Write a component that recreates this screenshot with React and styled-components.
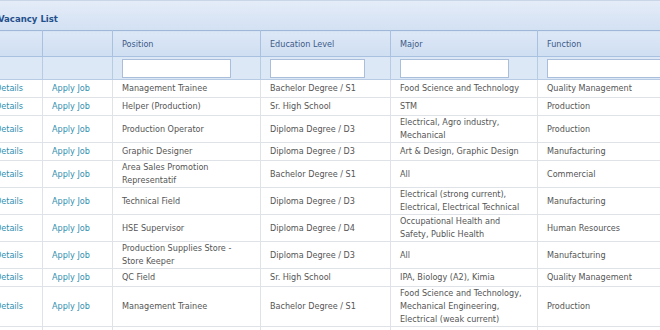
import React from "react";
import styled, { createGlobalStyle } from "styled-components";

const Global = createGlobalStyle`
  html, body { margin: 0; padding: 0; background: #fff; overflow: hidden; }
  body { width: 660px; height: 330px; }
`;

const Panel = styled.div`
  margin-left: -15px;
  width: 703px;
  font-family: "DejaVu Sans Condensed", "DejaVu Sans", sans-serif;
  font-stretch: condensed;
  font-size: 9px;
  color: #555;
`;

const TitleBar = styled.div`
  height: 30px;
  box-sizing: border-box;
  border-top: 1px solid #c9d6e8;
  background: linear-gradient(#e4ecf8, #d3e1f3);
  padding: 12px 0 0 13px;
  font-weight: bold;
  font-size: 9.5px;
  color: #24508c;
`;

const Table = styled.table`
  border-collapse: collapse;
  table-layout: fixed;
  width: 703px;
`;

const HeadCell = styled.th`
  height: 24px;
  padding: 1px 0 0 9px;
  text-align: left;
  font-weight: normal;
  color: #3d5a88;
  background: linear-gradient(#dde8f6, #cfdef2);
  border: 1px solid #a9c1e0;
  border-top: 1px solid #9fb8da;
  white-space: nowrap;
`;

const FilterCell = styled.td`
  height: 22px;
  padding: 0 0 0 9px;
  background: #dde8f6;
  border: 1px solid #b8cbe4;
  border-top: none;
`;

const FilterInput = styled.input`
  display: block;
  box-sizing: border-box;
  width: ${(p) => p.$w}px;
  height: 19px;
  margin: 0;
  border: 1px solid #a8bedb;
  background: #fff;
  outline: none;
`;

const Cell = styled.td`
  height: 17px;
  padding: 0 0 0 9px;
  line-height: 13px;
  vertical-align: middle;
  border: 1px solid #dfe2e6;
  border-top: none;
  white-space: nowrap;
  color: #555;
`;

const Link = styled.a`
  color: #3190b0;
  text-decoration: none;
  cursor: pointer;
`;

const cols = [
  { w: 57, input: 0 },
  { w: 70, input: 0 },
  { w: 148, input: 109, label: "Position" },
  { w: 130, input: 95, label: "Education Level" },
  { w: 147, input: 109, label: "Major" },
  { w: 151, input: 125, label: "Function" },
];

const rows = [
  [["Management Trainee"], ["Bachelor Degree / S1"], ["Food Science and Technology"], ["Quality Management"]],
  [["Helper (Production)"], ["Sr. High School"], ["STM"], ["Production"]],
  [["Production Operator"], ["Diploma Degree / D3"], ["Electrical, Agro industry,", "Mechanical"], ["Production"]],
  [["Graphic Designer"], ["Diploma Degree / D3"], ["Art & Design, Graphic Design"], ["Manufacturing"]],
  [["Area Sales Promotion", "Representatif"], ["Bachelor Degree / S1"], ["All"], ["Commercial"]],
  [["Technical Field"], ["Diploma Degree / D3"], ["Electrical (strong current),", "Electrical, Electrical Technical"], ["Manufacturing"]],
  [["HSE Supervisor"], ["Diploma Degree / D4"], ["Occupational Health and", "Safety, Public Health"], ["Human Resources"]],
  [["Production Supplies Store -", "Store Keeper"], ["Diploma Degree / D3"], ["All"], ["Manufacturing"]],
  [["QC Field"], ["Sr. High School"], ["IPA, Biology (A2), Kimia"], ["Quality Management"]],
  [["Management Trainee"], ["Bachelor Degree / S1"], ["Food Science and Technology,", "Mechanical Engineering,", "Electrical (weak current)"], ["Production"]],
  [["Operator Produksi"], ["Sr. High School"], ["All"], ["Production"]],
];

function Lines({ lines }) {
  return lines.map((l, i) => (
    <React.Fragment key={i}>
      {i > 0 && <br />}
      {l}
    </React.Fragment>
  ));
}

export default function App() {
  return (
    <>
      <Global />
      <Panel>
        <TitleBar>Vacancy List</TitleBar>
        <Table>
          <colgroup>
            {cols.map((c, i) => (
              <col key={i} style={{ width: c.w }} />
            ))}
          </colgroup>
          <thead>
            <tr>
              {cols.map((c, i) => (
                <HeadCell key={i}>{c.label || ""}</HeadCell>
              ))}
            </tr>
            <tr>
              {cols.map((c, i) => (
                <FilterCell key={i}>{c.input ? <FilterInput $w={c.input} /> : null}</FilterCell>
              ))}
            </tr>
          </thead>
          <tbody>
            {rows.map((r, i) => (
              <tr key={i}>
                <Cell>
                  <Link>Details</Link>
                </Cell>
                <Cell>
                  <Link>Apply Job</Link>
                </Cell>
                {r.map((lines, j) => (
                  <Cell key={j}>
                    <Lines lines={lines} />
                  </Cell>
                ))}
              </tr>
            ))}
          </tbody>
        </Table>
      </Panel>
    </>
  );
}
